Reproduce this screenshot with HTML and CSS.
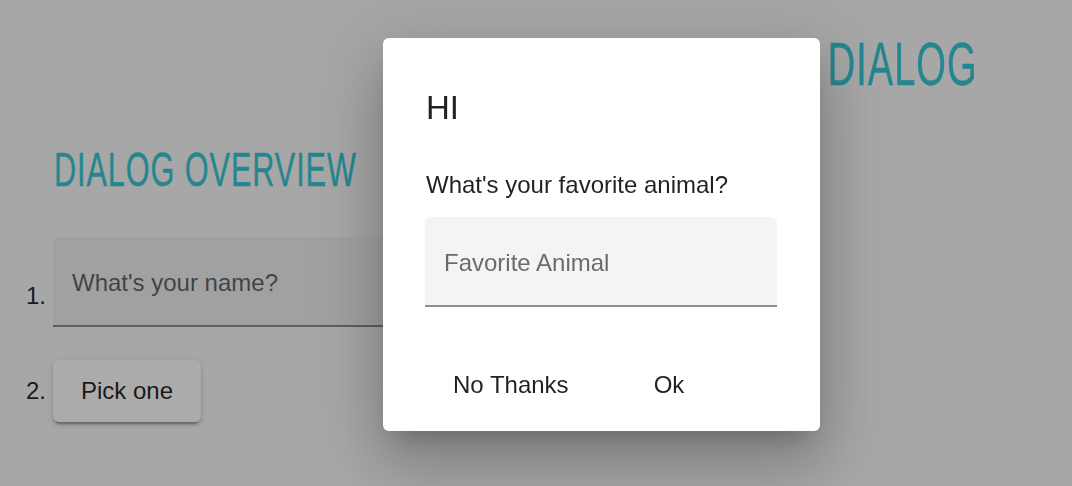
FILE: index.html
```html
<!DOCTYPE html>
<html lang="en">
<head>
<meta charset="utf-8">
<title>Dialog Overview</title>
<link rel="stylesheet" href="styles.css">
</head>
<body>
<header class="top-bar">
  <h1 class="brand"><span class="condensed">DIALOG</span></h1>
</header>
<main class="content">
  <h2 class="section-title"><span class="condensed">DIALOG OVERVIEW</span></h2>
  <ol class="steps">
    <li class="step step-field">
      <span class="step-num">1.</span>
      <div class="field page-field"><span class="placeholder">What's your name?</span></div>
    </li>
    <li class="step step-button">
      <span class="step-num">2.</span>
      <button class="raised-btn" type="button">Pick one</button>
    </li>
  </ol>
</main>
<div class="backdrop"></div>
<div class="dialog" role="dialog">
  <h2 class="dialog-title">HI</h2>
  <p class="dialog-question">What's your favorite animal?</p>
  <div class="field dialog-field"><span class="placeholder">Favorite Animal</span></div>
  <div class="dialog-actions">
    <button class="flat-btn" type="button">No Thanks</button>
    <button class="flat-btn ok-btn" type="button">Ok</button>
  </div>
</div>
</body>
</html>
```
FILE: styles.css
```css
* { box-sizing: border-box; }

html, body {
  margin: 0;
  padding: 0;
  height: 486px;
  overflow: hidden;
}

body {
  background: #fafafa;
  font-family: "Liberation Sans", Arial, sans-serif;
  color: rgba(0, 0, 0, 0.87);
  font-size: 24px;
}

.condensed {
  display: inline-block;
  font-family: "Liberation Sans", Arial, sans-serif;
  font-weight: 400;
  color: #38c8d6;
  -webkit-text-stroke: 0.4px #38c8d6;
  letter-spacing: 1.5px;
  transform: scaleX(0.625);
  white-space: nowrap;
}

.top-bar {
  text-align: right;
  padding-right: 94px;
  padding-top: 34px;
}

.brand {
  margin: 0;
  font-size: 61px;
  line-height: 60px;
  font-weight: 400;
}

.brand .condensed { transform-origin: right center; }

.section-title {
  margin: 51px 0 0 54px;
  font-size: 49px;
  line-height: 49px;
  font-weight: 400;
}

.section-title .condensed { transform-origin: left center; }

.steps {
  list-style: none;
  margin: 43px 0 0 0;
  padding: 0 0 0 26px;
}

.step {
  display: flex;
}

.step-num {
  width: 27px;
  flex: none;
  font-size: 24px;
  line-height: 28px;
  color: rgba(0, 0, 0, 0.87);
}

.step-field .step-num { padding-top: 45px; }

.step-button {
  margin-top: 33px;
  align-items: baseline;
}

.field {
  height: 90px;
  border-radius: 6px 6px 0 0;
  padding: 32px 0 0 19px;
  font-size: 24px;
  line-height: 28px;
}

.page-field {
  width: 380px;
  background: rgba(0, 0, 0, 0.04);
  border-bottom: 2px solid rgba(0, 0, 0, 0.42);
}

.page-field .placeholder { color: rgba(0, 0, 0, 0.6); }

.raised-btn {
  font-family: "Liberation Sans", Arial, sans-serif;
  font-size: 24px;
  line-height: 62px;
  height: 62px;
  padding: 0 28px;
  border: 0;
  border-radius: 6px;
  background: #fff;
  color: rgba(0, 0, 0, 0.87);
  box-shadow: 0 4.5px 1.5px -3px rgba(0, 0, 0, 0.2), 0 3px 3px 0 rgba(0, 0, 0, 0.14), 0 1.5px 7.5px 0 rgba(0, 0, 0, 0.12);
}

.backdrop {
  position: fixed;
  inset: 0;
  background: rgba(0, 0, 0, 0.33);
}

.dialog {
  position: absolute;
  left: 383px;
  top: 38px;
  width: 437px;
  height: 393px;
  background: #fff;
  border-radius: 6px;
  padding: 50px 43px 0 43px;
  box-shadow: 0 16px 22px -10px rgba(0, 0, 0, 0.2), 0 36px 57px 4px rgba(0, 0, 0, 0.14), 0 14px 69px 12px rgba(0, 0, 0, 0.12);
}

.dialog-title {
  margin: 0;
  font-size: 33px;
  line-height: 40px;
  font-weight: 400;
  color: rgba(0, 0, 0, 0.87);
}

.dialog-question {
  margin: 43px 0 0 0;
  font-size: 24px;
  line-height: 28px;
  color: rgba(0, 0, 0, 0.87);
}

.dialog-field {
  margin-top: 18px;
  width: 352px;
  margin-left: -1px;
  background: #f4f4f4;
  border-bottom: 2px solid #8e8e8e;
}

.dialog-field .placeholder { color: #6b6b6b; }

.dialog-actions {
  display: flex;
  margin: 51px 0 0 3px;
}

.flat-btn {
  font-family: "Liberation Sans", Arial, sans-serif;
  font-size: 24px;
  line-height: 54px;
  height: 54px;
  padding: 0 24px;
  border: 0;
  background: transparent;
  color: rgba(0, 0, 0, 0.87);
}

.ok-btn { margin-left: 37px; }
```
